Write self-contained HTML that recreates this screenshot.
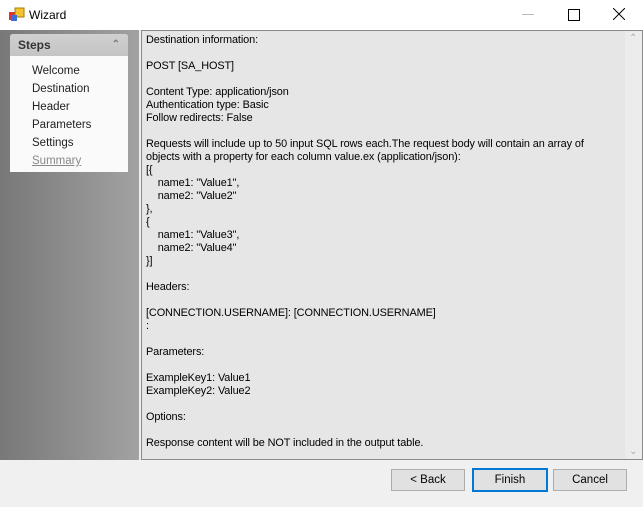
<!DOCTYPE html>
<html><head><style>
body{margin:0;width:643px;height:507px;overflow:hidden;background:#f0f0f0;font-family:"Liberation Sans",sans-serif;position:relative}
.title{position:absolute;left:0;top:0;width:643px;height:30px;background:#fff}
.left{position:absolute;left:0;top:30px;width:139px;height:430px;background:linear-gradient(to right,#787878,#a2a2a2)}
.steps{position:absolute;left:10px;top:34px;width:118px;height:138px;background:#fafafa;border-radius:3px 3px 0 0}
.sh{height:22px;background:linear-gradient(#d0d0d0,#c4c4c4);border-radius:3px 3px 0 0;font-weight:bold;font-size:12px;color:#333;line-height:22px;padding-left:8px}
.steps .it{font-size:11.5px;color:#222;padding-left:22px;height:18px;line-height:18px}
.txt{position:absolute;left:141px;top:30px;width:500px;height:428px;background:#e6e6e6;border:1px solid #8a8a8a}
pre{margin:0;padding:3px 0 0 4px;font-family:"Liberation Sans",sans-serif;font-size:10.9px;letter-spacing:-0.1px;line-height:13px;color:#000}
.sb{position:absolute;right:0;top:0;width:17px;height:428px;background:#ececec}
.btn{position:absolute;top:469px;width:72px;height:20px;border:1px solid #adadad;background:#e1e1e1;font-size:11.5px;text-align:center;line-height:20px}
</style></head><body>
<div class="title">
<svg style="position:absolute;left:9px;top:7px" width="16" height="16"><rect x="0" y="5" width="8" height="8" fill="#d33"/><rect x="6" y="1" width="9" height="9" fill="#f4c430" stroke="#a67c00"/><rect x="2" y="8" width="6" height="6" fill="#3b6fd8"/></svg>
<div style="position:absolute;left:29px;top:8px;font-size:12px">Wizard</div>
<div style="position:absolute;left:522px;top:14px;width:12px;height:1px;background:#bbb"></div>
<div style="position:absolute;left:568px;top:9px;width:10px;height:10px;border:1px solid #000"></div>
<svg style="position:absolute;left:613px;top:8px" width="12" height="12"><path d="M0 0L12 12M12 0L0 12" stroke="#000" stroke-width="1"/></svg>
</div>
<div class="left"></div>
<div class="steps"><div class="sh">Steps<span style="float:right;margin-right:8px;color:#777;font-size:10px">&#8963;</span></div>
<div style="height:6px"></div>
<div class="it">Welcome</div><div class="it">Destination</div><div class="it">Header</div><div class="it">Parameters</div><div class="it">Settings</div><div class="it" style="color:#888;text-decoration:underline">Summary</div></div>
<div class="txt"><pre>Destination information:

POST [SA_HOST]

Content Type: application/json
Authentication type: Basic
Follow redirects: False

Requests will include up to 50 input SQL rows each.The request body will contain an array of
objects with a property for each column value.ex (application/json):
[{
    name1: "Value1",
    name2: "Value2"
},
{
    name1: "Value3",
    name2: "Value4"
}]

Headers:

[CONNECTION.USERNAME]: [CONNECTION.USERNAME]
:

Parameters:

ExampleKey1: Value1
ExampleKey2: Value2

Options:

Response content will be NOT included in the output table.</pre>
<div class="sb"><span style="position:absolute;left:4px;top:2px;color:#aaa;font-size:10px">&#8963;</span><span style="position:absolute;left:4px;bottom:2px;color:#aaa;font-size:10px">&#8964;</span></div></div>
<div class="btn" style="left:391px">&lt; Back</div>
<div class="btn" style="left:472px;border:2px solid #0078d7;top:468px;height:20px">Finish</div>
<div class="btn" style="left:553px">Cancel</div>
</body></html>
